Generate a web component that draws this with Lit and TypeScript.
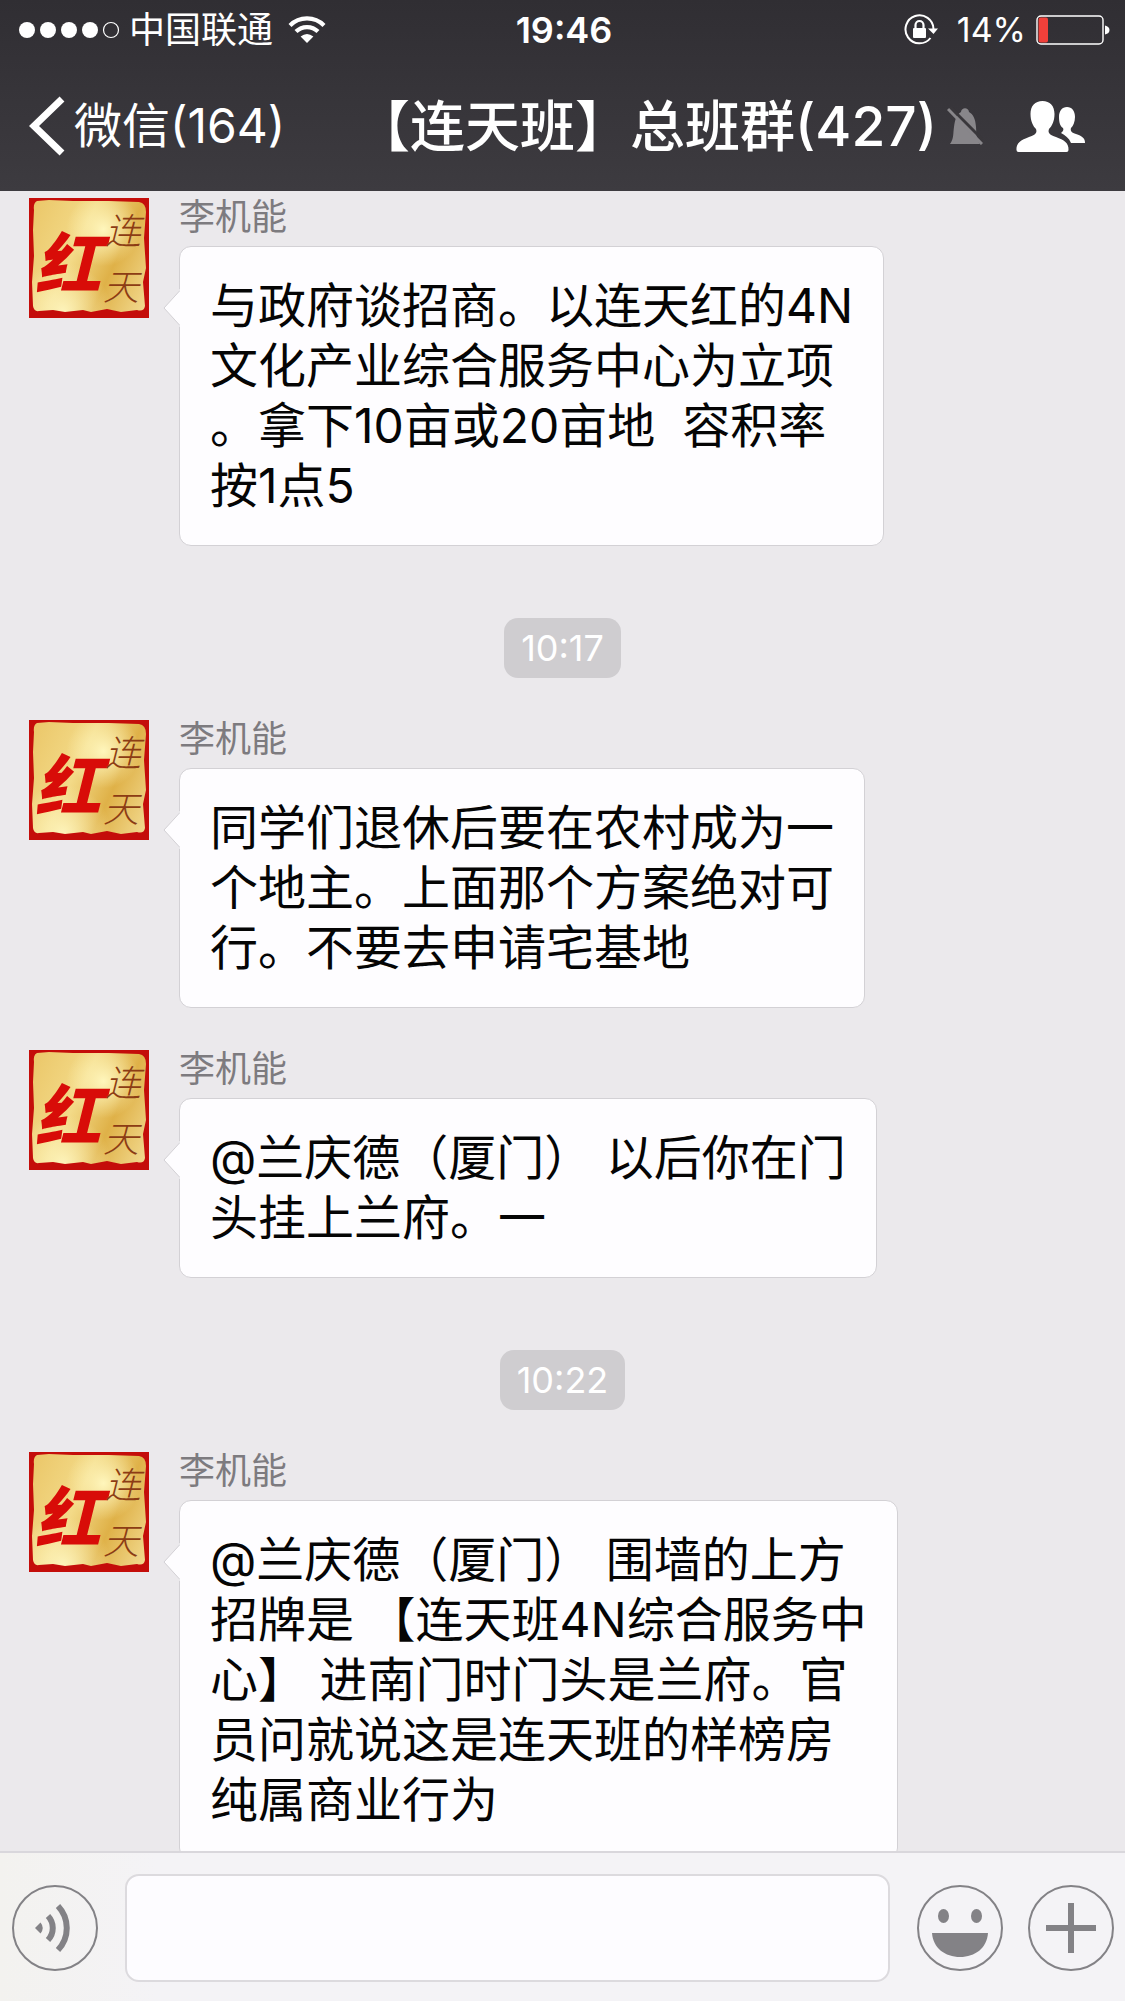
import { LitElement, html, svg, css } from "lit";
import { customElement, property } from "lit/decorators.js";

type Entry =
  | { kind: "time"; text: string }
  | { kind: "message"; author: string; text: string };

const entries: Entry[] = [
  {
    kind: "message",
    author: "李机能",
    text: "与政府谈招商。以连天红的4N\n文化产业综合服务中心为立项\n。拿下10亩或20亩地  容积率\n按1点5",
  },
  { kind: "time", text: "10:17" },
  {
    kind: "message",
    author: "李机能",
    text: "同学们退休后要在农村成为一\n个地主。上面那个方案绝对可\n行。不要去申请宅基地",
  },
  {
    kind: "message",
    author: "李机能",
    text: "@兰庆德（厦门） 以后你在门\n头挂上兰府。一",
  },
  { kind: "time", text: "10:22" },
  {
    kind: "message",
    author: "李机能",
    text: "@兰庆德（厦门） 围墙的上方\n招牌是 【连天班4N综合服务中\n心】 进南门时门头是兰府。官\n员问就说这是连天班的样榜房\n纯属商业行为",
  },
];

@customElement("status-bar")
export class StatusBar extends LitElement {
  static styles = css`
    :host {
      display: grid;
      grid-template-columns: 1fr auto 1fr;
      align-items: center;
      height: 60px;
      padding: 0 15px 0 18px;
      font-size: 36px;
      line-height: 40px;
    }
    .side {
      display: flex;
      align-items: center;
    }
    .right {
      justify-content: flex-end;
    }
    .dots {
      margin-right: 9px;
    }
    .wifi {
      margin-left: 15px;
    }
    .time {
      font-weight: 600;
    }
    .lock {
      margin-right: 18px;
    }
    .percent {
      font-size: 34px;
      margin-right: 10px;
    }
    svg {
      display: block;
      flex: none;
    }
  `;

  render() {
    return html`
      <div class="side">
        <svg class="dots" width="102" height="18" viewBox="0 0 102 18" aria-hidden="true">
          ${[9, 30, 51, 72].map((x) => svg`<circle cx=${x} cy="9" r="8" fill="#fff" />`)}
          <circle cx="93" cy="9" r="7.5" fill="none" stroke="#fff" stroke-width="1.2" />
        </svg>
        <span>中国联通</span>
        <svg class="wifi" width="38" height="28" viewBox="0 0 38 28" aria-hidden="true">
          <g fill="none" stroke="#fff" stroke-width="4.2">
            <path d="M2 9.5 A24 24 0 0 1 36 9.5" />
            <path d="M8 15.6 A15.6 15.6 0 0 1 30 15.6" />
          </g>
          <path d="M12.6 20.6 Q19 15.2 25.4 20.6 L19 27 Z" fill="#fff" />
        </svg>
      </div>
      <span class="time">19:46</span>
      <div class="side right">
        <svg class="lock" width="36" height="32" viewBox="0 0 36 32" aria-hidden="true">
          <path d="M27.5 24 A14 14 0 1 1 30.5 15" fill="none" stroke="#fff" stroke-width="2" />
          <path d="M25 14.5 H35 L30.5 20 Z" fill="#fff" />
          <rect x="10" y="14" width="13" height="10" rx="1" fill="#fff" />
          <path d="M12.5 14 V11 A4 4 0 0 1 20.5 11 V14" fill="none" stroke="#fff" stroke-width="2.2" />
        </svg>
        <span class="percent">14%</span>
        <svg width="74" height="30" viewBox="0 0 74 30" aria-hidden="true">
          <rect x="1" y="1" width="66" height="28" rx="4" fill="none" stroke="#fff" stroke-width="1.4" />
          <rect x="2.6" y="2.6" width="9.4" height="24.8" rx="2" fill="#f0403a" />
          <path d="M69 10.5 Q73.5 11.5 73.5 15 T69 19.5 Z" fill="#fff" />
        </svg>
      </div>
    `;
  }
}

@customElement("nav-bar")
export class NavBar extends LitElement {
  static styles = css`
    :host {
      display: flex;
      align-items: center;
      height: 131px;
      padding: 0 39px 0 29px;
    }
    .back {
      display: flex;
      align-items: center;
      gap: 9px;
      color: inherit;
      text-decoration: none;
      font-size: 48px;
      line-height: 60px;
    }
    .heading {
      flex: 1;
      display: flex;
      align-items: center;
      justify-content: flex-end;
      gap: 10px;
      min-width: 0;
    }
    h1 {
      margin: 0;
      font-size: 55px;
      line-height: 64px;
      font-weight: 500;
      white-space: nowrap;
    }
    .members {
      margin: 0 0 0 33px;
      padding: 0;
      border: 0;
      background: none;
      color: inherit;
    }
    svg {
      display: block;
      flex: none;
    }
  `;

  render() {
    return html`
      <a class="back" href="#chats">
        <svg width="36" height="60" viewBox="0 0 36 60" aria-hidden="true">
          <path d="M33 3 L5 30 L33 57" fill="none" stroke="#fff" stroke-width="7" />
        </svg>
        <span>微信(164)</span>
      </a>
      <div class="heading">
        <h1>【连天班】总班群(427)</h1>
        <svg width="36" height="38" viewBox="0 0 36 38" aria-hidden="true">
          <path
            d="M3 37 C7 32 6 26 7 20 C8 12 10 7 14 5 C14.5 0 21.5 0 22 5 C26 7 28.5 12 29 20 C29.500 27 29 32 33 37 Z"
            fill="#88868a"
          />
          <path d="M3 0 L37 34" stroke="#39373b" stroke-width="3" />
          <path d="M1 2 L35 37" stroke="#88868a" stroke-width="3" />
        </svg>
      </div>
      <button class="members" aria-label="群成员">
        <svg width="70" height="52" viewBox="0 0 70 52" aria-hidden="true">
          <path
            d="M51 7 C56 7 59 11 59 17 C59 22 57 26 55 28 C54 31 56 33 60 34 C66 36 69 38 69 43 H55 C53 38 49 35 45 33 C47 31 48 30 47 28 C44 26 43 22 43 17 C43 11 46 7 51 7 Z"
            fill="#fff"
          />
          <path
            d="M26.500 1 C34 1 38.500 6 38.500 14 C38.500 21 36 26 33 29 C31.500 33 34 35 40 37 C48 40 53 43 52.500 50 Q52.500 52 50.500 52 H2.500 Q.5 52 .5 50 C0 43 5 40 13 37 C19 35 21.500 33 20 29 C17 26 14.500 21 14.500 14 C14.500 6 19 1 26.500 1 Z"
            fill="#fff"
          />
        </svg>
      </button>
    `;
  }
}

@customElement("seal-avatar")
export class SealAvatar extends LitElement {
  static styles = css`
    :host {
      display: block;
      flex: none;
      width: 120px;
      height: 120px;
      background:
        radial-gradient(circle at 62% 26%, #fff6bc 0, rgba(255, 246, 188, 0) 32%),
        radial-gradient(circle at 28% 94%, #fdf3ba 0, rgba(253, 243, 186, 0) 34%),
        linear-gradient(115deg, #eac566, #f3da88 40%, #dfb148 66%, #f5e09a);
    }
    svg {
      display: block;
    }
    .brush {
      font-family: "Noto Sans CJK SC", sans-serif;
      font-style: italic;
    }
    .main {
      font-size: 66px;
      font-weight: 900;
      fill: #d80c08;
    }
    .small {
      font-size: 36px;
      font-weight: 300;
      fill: #8c3c14;
    }
  `;

  render() {
    return html`
      <svg width="120" height="120" viewBox="0 0 120 120" role="img" aria-label="头像">
        <text class="brush main" x="6" y="90">红</text>
        <text class="brush small" x="76" y="46">连</text>
        <text class="brush small" x="74" y="102">天</text>
        <path
          d="M0 0 H120 V120 H0 Z M8 3 Q4 5 5 12 L4 32 L5 58 L3 84 L4 108 Q5 114 10 113 L24 112 L36 114 L54 112 L62 114 L78 111 L92 114 L108 112 Q115 114 116 108 L114 84 L117 70 L115 40 L117 14 Q117 5 110 4 L80 3 L44 3 L20 2 Z"
          fill="#c40d0a"
          fill-rule="evenodd"
        />
      </svg>
    `;
  }
}

@customElement("chat-message")
export class ChatMessage extends LitElement {
  @property() author = "";
  @property() text = "";

  static styles = css`
    :host {
      display: flex;
      align-items: flex-start;
      gap: 30px;
    }
    .body {
      display: flex;
      flex-direction: column;
      align-items: flex-start;
      gap: 10px;
      min-width: 0;
    }
    .author {
      color: #7d7b7f;
      font-size: 36px;
      line-height: 38px;
    }
    .bubble {
      position: relative;
      margin: 0;
      padding: 29px 30px;
      border: 1px solid #d3d1d5;
      border-radius: 12px;
      background: #fefdff;
      color: #050505;
      font-size: 48px;
      line-height: 60px;
      white-space: pre;
    }
    .tail {
      position: absolute;
      left: -17px;
      top: 42px;
    }
  `;

  render() {
    return html`
      <seal-avatar></seal-avatar>
      <div class="body">
        <span class="author">${this.author}</span>
        <p class="bubble"><svg class="tail" width="19" height="38" viewBox="0 0 19 38" aria-hidden="true"><path d="M19 0 H16.500 V2 L1 19 L16.500 36 V38 H19 Z" fill="#fefdff" /><path d="M16.500 2 L1 19 L16.500 36" fill="none" stroke="#d3d1d5" /></svg>${this.text}</p>
      </div>
    `;
  }
}

@customElement("chat-composer")
export class ChatComposer extends LitElement {
  static styles = css`
    :host {
      display: flex;
      align-items: center;
      gap: 27px;
      padding: 21px 11px 19px 12px;
      border-top: 2px solid #d9d7dc;
      background: linear-gradient(90deg, #f3f2ef, #f4f3f6 14%);
    }
    .field {
      flex: 1;
      min-width: 0;
      box-sizing: border-box;
      height: 108px;
      padding: 0 24px;
      border: 2px solid #dcdade;
      border-radius: 14px;
      background: #fdfcff;
      font: inherit;
      font-size: 48px;
      outline: none;
    }
    .actions {
      display: flex;
      gap: 25px;
    }
    .round {
      flex: none;
      padding: 0;
      border: 0;
      border-radius: 50%;
      background: none;
      color: #838286;
    }
    svg {
      display: block;
    }
  `;

  private ring = svg`<circle cx="43" cy="43" r="42" fill="none" stroke="currentColor" stroke-width="2" />`;

  render() {
    return html`
      <button class="round" aria-label="语音">
        <svg width="86" height="86" viewBox="0 0 86 86">
          ${this.ring}
          <path d="M23 43 L28.500 37.500 Q33 43 28.500 48.500 Z" fill="currentColor" />
          <g fill="none" stroke="currentColor" stroke-width="6">
            <path d="M36 31 A17.500 17.500 0 0 1 36 55" />
            <path d="M46 21 A32 32 0 0 1 46 65" />
          </g>
        </svg>
      </button>
      <input class="field" type="text" aria-label="输入消息" />
      <div class="actions">
        <button class="round" aria-label="表情">
          <svg width="86" height="86" viewBox="0 0 86 86">
            ${this.ring}
            <g fill="currentColor">
              <ellipse cx="26.500" cy="31" rx="5.500" ry="7" />
              <ellipse cx="59.500" cy="31" rx="5.500" ry="7" />
              <path d="M15 48 H71 C70 63 58 72 43 72 S16 63 15 48 Z" />
            </g>
          </svg>
        </button>
        <button class="round" aria-label="更多">
          <svg width="86" height="86" viewBox="0 0 86 86">
            ${this.ring}
            <path d="M43 18 V68 M18 43 H68" stroke="currentColor" stroke-width="6" />
          </svg>
        </button>
      </div>
    `;
  }
}

@customElement("app-root")
export class AppRoot extends LitElement {
  static styles = css`
    :host {
      display: flex;
      flex-direction: column;
      height: 100vh;
      overflow: hidden;
      background: #ebe9ec;
      font-family: Inter, "Noto Sans CJK SC", sans-serif;
    }
    .top {
      flex: none;
      background: linear-gradient(#302e33, #3d3b40);
      color: #fff;
    }
    .chat {
      flex: 1;
      min-height: 0;
      display: flex;
      flex-direction: column;
      gap: 42px;
      padding: 7px 29px 42px;
      overflow-y: auto;
      scrollbar-width: none;
    }
    .chat > * {
      flex: none;
    }
    .stamp {
      align-self: center;
      margin-top: 30px;
      padding: 0 17px;
      border-radius: 14px;
      background: #cfcdd0;
      color: #fff;
      font-size: 36px;
      line-height: 60px;
    }
    .composer {
      flex: none;
    }
  `;

  render() {
    return html`
      <header class="top">
        <status-bar></status-bar>
        <nav-bar></nav-bar>
      </header>
      <main class="chat">
        ${entries.map((e) =>
          e.kind === "time"
            ? html`<time class="stamp">${e.text}</time>`
            : html`<chat-message .author=${e.author} .text=${e.text}></chat-message>`
        )}
      </main>
      <chat-composer class="composer"></chat-composer>
    `;
  }
}
